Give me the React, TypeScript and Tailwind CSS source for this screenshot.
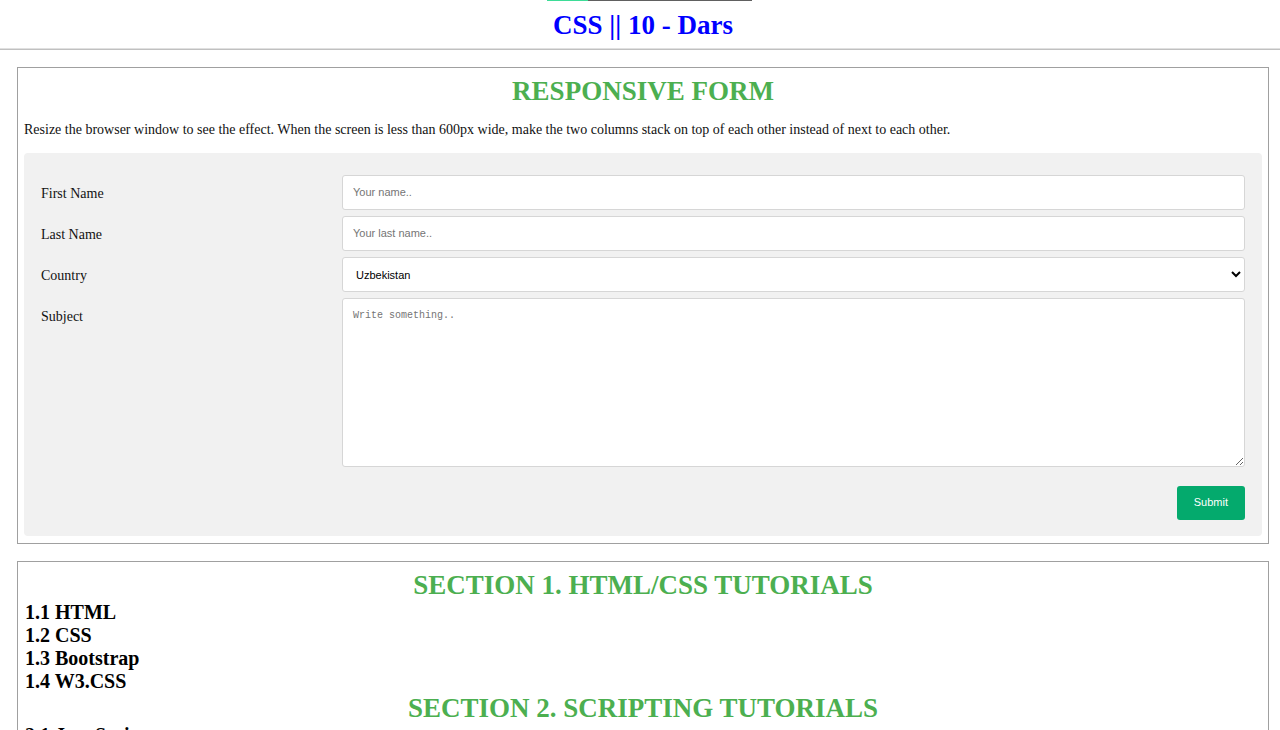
import type { ReactNode } from 'react';

const fieldClass =
  'block w-full rounded-[3px] border border-[#d6d6d6] bg-white font-["Liberation_Sans",Arial,sans-serif] text-[11px] text-black placeholder:text-[#757575]';

const tutorials = [
  { title: 'SECTION 1. HTML/CSS TUTORIALS', items: ['1.1 HTML', '1.2 CSS', '1.3 Bootstrap', '1.4 W3.CSS'] },
  { title: 'SECTION 2. SCRIPTING TUTORIALS', items: ['2.1 JavaScript'] },
];

function SectionTitle({ children }: { children: ReactNode }) {
  return <h1 className="text-center text-[27px] leading-[31px] font-bold text-[#4caf50]">{children}</h1>;
}

function Row({ id, label, children }: { id: string; label: string; children: ReactNode }) {
  return (
    <div className="flex flex-col sm:flex-row">
      <label htmlFor={id} className="w-full pt-[11px] text-[14px] leading-4 text-[#111111] sm:w-1/4">
        {label}
      </label>
      <div className="w-full sm:w-3/4">{children}</div>
    </div>
  );
}

export default function App() {
  return (
    <div className="min-h-screen bg-white font-['Liberation_Serif','Times_New_Roman',serif] text-black">
      <div className="relative">
        <div className="absolute top-0 left-[547px] flex h-px w-[205px] bg-[#606060]">
          <span className="h-px w-[41px] bg-[#3ddc97]" />
        </div>
        <h1 className="pt-[10px] pb-[7px] pl-[6px] text-center text-[27px] leading-[31px] font-bold text-[#0000ff]">
          CSS || 10 - Dars
        </h1>
      </div>
      <hr className="border-0 border-t border-b border-t-[#e0e0e0] border-b-[#c0c0c0]" />

      <main className="mt-[17px] mr-[11px] ml-[17px] flex flex-col gap-[17px]">
        <section className="border border-[#a0a0a0] px-[6px] pt-2 pb-[7px]">
          <SectionTitle>RESPONSIVE FORM</SectionTitle>
          <p className="my-[15px] text-[14px] leading-4 text-[#111111]">
            Resize the browser window to see the effect. When the screen is less than 600px wide, make the two
            columns stack on top of each other instead of next to each other.
          </p>
          <form
            className="flex flex-col gap-[6px] rounded-[4px] bg-[#f1f1f1] px-[17px] pt-[22px] pb-4"
            onSubmit={(event) => event.preventDefault()}
          >
            <Row id="fname" label="First Name">
              <input id="fname" type="text" placeholder="Your name.." className={`${fieldClass} h-[35px] px-[10px] pb-px`} />
            </Row>
            <Row id="lname" label="Last Name">
              <input id="lname" type="text" placeholder="Your last name.." className={`${fieldClass} h-[35px] px-[10px] pb-px`} />
            </Row>
            <Row id="country" label="Country">
              <select id="country" className={`${fieldClass} h-[35px] pl-[9px]`}>
                <option>Uzbekistan</option>
              </select>
            </Row>
            <Row id="subject" label="Subject">
              <textarea
                id="subject"
                placeholder="Write something.."
                className="block h-[169px] w-full resize rounded-[3px] border border-[#d6d6d6] bg-white p-[10px] font-['Liberation_Mono',monospace] text-[10px] leading-[14px] text-black placeholder:text-[#757575]"
              />
            </Row>
            <button
              type="submit"
              className="mt-[13px] h-[34px] self-end rounded-[3px] bg-[#04aa6d] px-[17px] pb-px font-['Liberation_Sans',Arial,sans-serif] text-[11px] text-white"
            >
              Submit
            </button>
          </form>
        </section>

        <section className="border border-[#a0a0a0] px-[7px] pt-2 pb-[7px]">
          {tutorials.map(({ title, items }) => (
            <div key={title}>
              <SectionTitle>{title}</SectionTitle>
              {items.map((item) => (
                <h2 key={item} className="text-[20px] leading-[23px] font-bold">
                  {item}
                </h2>
              ))}
            </div>
          ))}
        </section>
      </main>
    </div>
  );
}
